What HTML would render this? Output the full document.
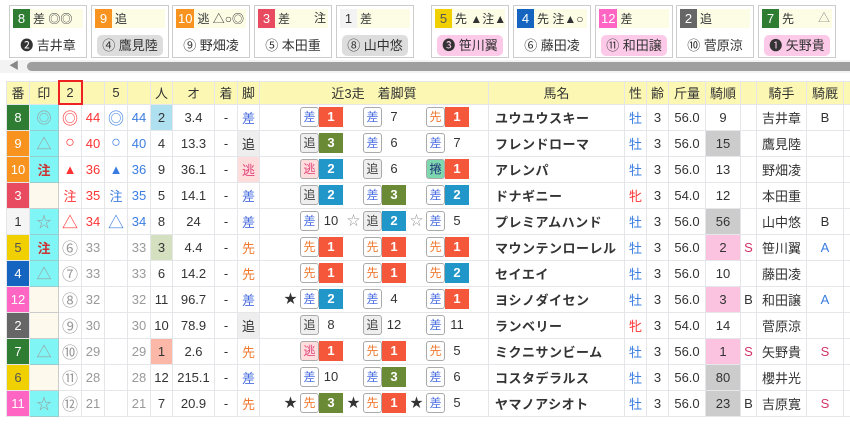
<!DOCTYPE html>
<html><head><meta charset="utf-8"><style>
*{box-sizing:border-box;margin:0;padding:0}
body{width:850px;height:425px;overflow:hidden;background:#fff;font-family:"Liberation Sans","Noto Sans CJK JP",sans-serif;color:#333;font-size:13px;position:relative}
.card{position:absolute;top:5px;width:78px;height:53px;border:1px solid #ccc;background:#fff}
.card .top{position:absolute;left:3px;top:3px;right:3px;height:19px;background:#fdfde6;font-size:12px;line-height:19px;white-space:nowrap;overflow:hidden}
.card .b{display:inline-block;min-width:17px;height:19px;text-align:center;color:#fff;margin-right:3px;padding:0 2px;font-size:13px}
.card .rt{position:absolute;right:2px;top:0}
.card .bot{position:absolute;left:0;right:0;top:29px;text-align:center;font-size:13px;line-height:21px}
.card .bot span{display:inline-block;padding:0 5px;border-radius:5px}
.pk{background:#fcc9e8}.gy{background:#ddd}
.sb{position:absolute;top:60px;left:0;width:850px;height:13px;background:#f3f3f3}
.sb .bar{position:absolute;left:27px;top:2px;right:0;height:9px;background:#9f9f9f;border-radius:5px 0 0 5px}
.sb .ar{position:absolute;left:9px;top:0;font-size:10px;color:#888;line-height:13px}
table{position:absolute;left:6px;top:80px;border-collapse:collapse;table-layout:fixed;width:844px}
td,th{border:1px solid #e4e6ea;height:26px;text-align:center;padding:0;white-space:nowrap;overflow:hidden}
th{background:#fcf8b4;font-weight:normal;height:23px;color:#333}
.w{color:#fff}
.m{background:#80f5f5;border:1px solid #9cc;font-size:15px}
.e{background:#fdf9ec;border:1px solid #ccc}
.r{color:#f33}.bl{color:#3a7de0}.g{color:#999}
.mk2{font-size:16px}
.s{color:#4a6ee0}.k{color:#f07a30}.o{background:#eee}.n{background:#fdd;color:#e0457b}
.c{text-align:left;padding-left:24px}
.gp{display:inline-block;width:63px;height:20px;vertical-align:middle;font-size:0}
.st{display:inline-block;width:16px;font-size:13px;text-align:left;vertical-align:top;line-height:20px}
.t{display:inline-block;width:19px;height:20px;border:1px solid #aaa;border-radius:3px;font-size:12px;line-height:18px;text-align:center;vertical-align:top;background:#fff}
.t.o{background:#eee;color:#444}.t.n{background:#fdd;color:#e0457b}.t.mk{background:#7dd8b0;color:#237}
.nb{display:inline-block;width:24px;height:20px;color:#fff;font-weight:bold;font-size:13px;line-height:20px;text-align:center;vertical-align:top}
.p{display:inline-block;width:24px;font-size:13px;line-height:20px;text-align:center;vertical-align:top}
.n1{background:#f5573b}.n2{background:#2196c9}.n3{background:#6a8a35}
.nm{text-align:left;padding-left:6px;font-weight:bold;letter-spacing:0.5px}
.gr{background:#ccc}.pi{background:#fcc3e0}
.ss{color:#d2336b}
</style></head><body>
<div class="card" style="left:9px"><div class="top"><span class="b" style="background:#2e7d32">8</span>差 ◎◎</div><div class="bot"><span>❷ 吉井章</span></div></div>
<div class="card" style="left:91px"><div class="top"><span class="b" style="background:#f7931e">9</span>追</div><div class="bot"><span class="gy">④ 鷹見陸</span></div></div>
<div class="card" style="left:172px"><div class="top"><span class="b" style="background:#f7931e">10</span>逃 △○◎</div><div class="bot"><span>⑨ 野畑凌</span></div></div>
<div class="card" style="left:254px"><div class="top"><span class="b" style="background:#e84a5f">3</span>差<span class="rt">注</span></div><div class="bot"><span>⑤ 本田重</span></div></div>
<div class="card" style="left:336px"><div class="top"><span class="b" style="background:#f3f3f3;color:#333">1</span>差</div><div class="bot"><span class="gy">⑧ 山中悠</span></div></div>
<div class="card" style="left:431px"><div class="top"><span class="b" style="background:#f0d000;color:#555">5</span>先 ▲注▲</div><div class="bot"><span class="pk">❸ 笹川翼</span></div></div>
<div class="card" style="left:513px"><div class="top"><span class="b" style="background:#1565c0">4</span>先 注▲○</div><div class="bot"><span>⑥ 藤田凌</span></div></div>
<div class="card" style="left:595px"><div class="top"><span class="b" style="background:#ff66c4">12</span>差</div><div class="bot"><span class="pk">⑪ 和田譲</span></div></div>
<div class="card" style="left:676px"><div class="top"><span class="b" style="background:#666">2</span>追</div><div class="bot"><span>⑩ 菅原涼</span></div></div>
<div class="card" style="left:758px"><div class="top"><span class="b" style="background:#2e7d32">7</span>先<span class="rt" style="color:#888">△</span></div><div class="bot"><span class="pk">❶ 矢野貴</span></div></div>
<div class="sb"><span class="ar">◀</span><div class="bar"></div></div>
<table>
<colgroup><col style="width:23px"><col style="width:29px"><col style="width:23px"><col style="width:23px"><col style="width:23px"><col style="width:23px"><col style="width:22px"><col style="width:42px"><col style="width:23px"><col style="width:22px"><col style="width:229px"><col style="width:136px"><col style="width:22px"><col style="width:22px"><col style="width:37px"><col style="width:35px"><col style="width:16px"><col style="width:50px"><col style="width:37px"><col style="width:7px"></colgroup>
<tr><th>番</th><th>印</th><th style="border:2px solid #e22">2</th><th></th><th>5</th><th></th><th>人</th><th>オ</th><th>着</th><th>脚</th><th>近3走　着脚質</th><th>馬名</th><th>性</th><th>齢</th><th>斤量</th><th>騎順</th><th></th><th>騎手</th><th>騎厩</th><th></th></tr>
<tr><td class="w" style="background:#2e7d32">8</td><td class="m g">◎</td><td class="r mk2">◎</td><td class="r">44</td><td class="bl mk2">◎</td><td class="bl">44</td><td style="background:#aee0f0">2</td><td>3.4</td><td>-</td><td class="s">差</td><td class="c"><span class="gp"><span class="st"></span><span class="t s">差</span><span class="nb n1">1</span></span><span class="gp"><span class="st"></span><span class="t s">差</span><span class="p">7</span></span><span class="gp"><span class="st"></span><span class="t k">先</span><span class="nb n1">1</span></span></td><td class="nm">ユウユウスキー</td><td class="bl">牡</td><td>3</td><td>56.0</td><td>9</td><td></td><td>吉井章</td><td>B</td><td></td></tr>
<tr><td class="w" style="background:#f7931e">9</td><td class="m g">△</td><td class="r mk2">○</td><td class="r">40</td><td class="bl mk2">○</td><td class="bl">40</td><td>4</td><td>13.3</td><td>-</td><td class="o">追</td><td class="c"><span class="gp"><span class="st"></span><span class="t o">追</span><span class="nb n3">3</span></span><span class="gp"><span class="st"></span><span class="t s">差</span><span class="p">6</span></span><span class="gp"><span class="st"></span><span class="t s">差</span><span class="p">7</span></span></td><td class="nm">フレンドローマ</td><td class="bl">牡</td><td>3</td><td>56.0</td><td class="gr">15</td><td></td><td>鷹見陸</td><td></td><td></td></tr>
<tr><td class="w" style="background:#f7931e">10</td><td class="m" style="color:#c33;font-weight:bold;font-size:13px">注</td><td class="r">▲</td><td class="r">36</td><td class="bl">▲</td><td class="bl">36</td><td>9</td><td>36.1</td><td>-</td><td class="n">逃</td><td class="c"><span class="gp"><span class="st"></span><span class="t n">逃</span><span class="nb n2">2</span></span><span class="gp"><span class="st"></span><span class="t o">追</span><span class="p">6</span></span><span class="gp"><span class="st"></span><span class="t mk">捲</span><span class="nb n1">1</span></span></td><td class="nm">アレンパ</td><td class="bl">牡</td><td>3</td><td>56.0</td><td>13</td><td></td><td>野畑凌</td><td></td><td></td></tr>
<tr><td class="w" style="background:#e84a5f">3</td><td class="e"></td><td class="r">注</td><td class="r">35</td><td class="bl">注</td><td class="bl">35</td><td>5</td><td>14.1</td><td>-</td><td class="s">差</td><td class="c"><span class="gp"><span class="st"></span><span class="t o">追</span><span class="nb n2">2</span></span><span class="gp"><span class="st"></span><span class="t s">差</span><span class="nb n3">3</span></span><span class="gp"><span class="st"></span><span class="t s">差</span><span class="nb n2">2</span></span></td><td class="nm">ドナギニー</td><td class="r">牝</td><td>3</td><td>54.0</td><td>12</td><td></td><td>本田重</td><td></td><td></td></tr>
<tr><td style="background:#f5f5f5">1</td><td class="m g">☆</td><td class="r mk2">△</td><td class="r">34</td><td class="bl mk2">△</td><td class="bl">34</td><td>8</td><td>24</td><td>-</td><td class="s">差</td><td class="c"><span class="gp"><span class="st"></span><span class="t s">差</span><span class="p">10</span></span><span class="gp"><span class="st g">☆</span><span class="t o">追</span><span class="nb n2">2</span></span><span class="gp"><span class="st g">☆</span><span class="t s">差</span><span class="p">5</span></span></td><td class="nm">プレミアムハンド</td><td class="bl">牡</td><td>3</td><td>56.0</td><td class="gr">56</td><td></td><td>山中悠</td><td>B</td><td></td></tr>
<tr><td style="background:#f0d000;color:#555">5</td><td class="m" style="color:#c33;font-weight:bold;font-size:13px">注</td><td class="g mk2">⑥</td><td class="g">33</td><td></td><td class="g">33</td><td style="background:#d5e0c0">3</td><td>4.4</td><td>-</td><td class="k">先</td><td class="c"><span class="gp"><span class="st"></span><span class="t k">先</span><span class="nb n1">1</span></span><span class="gp"><span class="st"></span><span class="t k">先</span><span class="nb n1">1</span></span><span class="gp"><span class="st"></span><span class="t k">先</span><span class="nb n1">1</span></span></td><td class="nm">マウンテンローレル</td><td class="bl">牡</td><td>3</td><td>56.0</td><td class="pi">2</td><td class="ss">S</td><td>笹川翼</td><td class="bl">A</td><td></td></tr>
<tr><td class="w" style="background:#1565c0">4</td><td class="m g">△</td><td class="g mk2">⑦</td><td class="g">33</td><td></td><td class="g">33</td><td>6</td><td>14.2</td><td>-</td><td class="k">先</td><td class="c"><span class="gp"><span class="st"></span><span class="t k">先</span><span class="nb n1">1</span></span><span class="gp"><span class="st"></span><span class="t k">先</span><span class="nb n1">1</span></span><span class="gp"><span class="st"></span><span class="t k">先</span><span class="nb n2">2</span></span></td><td class="nm">セイエイ</td><td class="bl">牡</td><td>3</td><td>56.0</td><td>10</td><td></td><td>藤田凌</td><td></td><td></td></tr>
<tr><td class="w" style="background:#ff66c4">12</td><td class="e"></td><td class="g mk2">⑧</td><td class="g">32</td><td></td><td class="g">32</td><td>11</td><td>96.7</td><td>-</td><td class="s">差</td><td class="c"><span class="gp"><span class="st">★</span><span class="t s">差</span><span class="nb n2">2</span></span><span class="gp"><span class="st"></span><span class="t s">差</span><span class="p">4</span></span><span class="gp"><span class="st"></span><span class="t s">差</span><span class="nb n1">1</span></span></td><td class="nm">ヨシノダイセン</td><td class="bl">牡</td><td>3</td><td>56.0</td><td class="pi">3</td><td>B</td><td>和田譲</td><td class="bl">A</td><td></td></tr>
<tr><td class="w" style="background:#666">2</td><td class="e"></td><td class="g mk2">⑨</td><td class="g">30</td><td></td><td class="g">30</td><td>10</td><td>78.9</td><td>-</td><td class="o">追</td><td class="c"><span class="gp"><span class="st"></span><span class="t o">追</span><span class="p">8</span></span><span class="gp"><span class="st"></span><span class="t o">追</span><span class="p">12</span></span><span class="gp"><span class="st"></span><span class="t s">差</span><span class="p">11</span></span></td><td class="nm">ランベリー</td><td class="r">牝</td><td>3</td><td>54.0</td><td>14</td><td></td><td>菅原涼</td><td></td><td></td></tr>
<tr><td class="w" style="background:#2e7d32">7</td><td class="m g">△</td><td class="g mk2">⑩</td><td class="g">29</td><td></td><td class="g">29</td><td style="background:#fbb8a8">1</td><td>2.6</td><td>-</td><td class="k">先</td><td class="c"><span class="gp"><span class="st"></span><span class="t n">逃</span><span class="nb n1">1</span></span><span class="gp"><span class="st"></span><span class="t k">先</span><span class="nb n1">1</span></span><span class="gp"><span class="st"></span><span class="t k">先</span><span class="p">5</span></span></td><td class="nm">ミクニサンビーム</td><td class="bl">牡</td><td>3</td><td>56.0</td><td class="pi">1</td><td class="ss">S</td><td>矢野貴</td><td class="ss">S</td><td></td></tr>
<tr><td style="background:#f0d000;color:#555">6</td><td class="e"></td><td class="g mk2">⑪</td><td class="g">28</td><td></td><td class="g">28</td><td>12</td><td>215.1</td><td>-</td><td class="s">差</td><td class="c"><span class="gp"><span class="st"></span><span class="t s">差</span><span class="p">10</span></span><span class="gp"><span class="st"></span><span class="t s">差</span><span class="nb n3">3</span></span><span class="gp"><span class="st"></span><span class="t s">差</span><span class="p">6</span></span></td><td class="nm">コスタデラルス</td><td class="bl">牡</td><td>3</td><td>56.0</td><td class="gr">80</td><td></td><td>櫻井光</td><td></td><td></td></tr>
<tr><td class="w" style="background:#ff66c4">11</td><td class="m g">☆</td><td class="g mk2">⑫</td><td class="g">21</td><td></td><td class="g">21</td><td>7</td><td>20.9</td><td>-</td><td class="k">先</td><td class="c"><span class="gp"><span class="st">★</span><span class="t k">先</span><span class="nb n3">3</span></span><span class="gp"><span class="st">★</span><span class="t k">先</span><span class="nb n1">1</span></span><span class="gp"><span class="st">★</span><span class="t s">差</span><span class="p">5</span></span></td><td class="nm">ヤマノアシオト</td><td class="bl">牡</td><td>3</td><td>56.0</td><td class="gr">23</td><td>B</td><td>吉原寛</td><td class="ss">S</td><td></td></tr>
</table>
</body></html>
